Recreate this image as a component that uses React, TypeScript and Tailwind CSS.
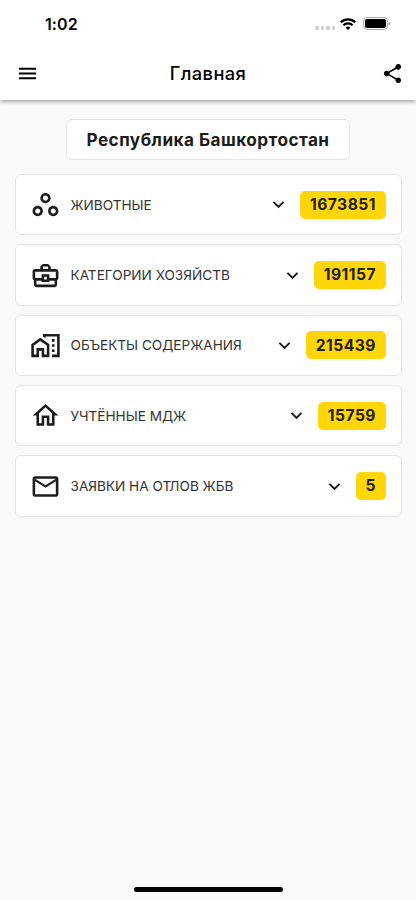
import {
	MdExpandMore,
	MdMenu,
	MdOutlineBusinessCenter,
	MdOutlineHome,
	MdOutlineHomeWork,
	MdOutlineMail,
	MdOutlineWorkspaces,
	MdShare,
} from "react-icons/md";
import type { IconType } from "react-icons";

type CategoryProps = {
	icon: IconType;
	title: string;
	count: number;
};

const categories: CategoryProps[] = [
	{ icon: MdOutlineWorkspaces, title: "ЖИВОТНЫЕ", count: 1673851 },
	{ icon: MdOutlineBusinessCenter, title: "КАТЕГОРИИ ХОЗЯЙСТВ", count: 191157 },
	{ icon: MdOutlineHomeWork, title: "ОБЪЕКТЫ СОДЕРЖАНИЯ", count: 215439 },
	{ icon: MdOutlineHome, title: "УЧТЁННЫЕ МДЖ", count: 15759 },
	{ icon: MdOutlineMail, title: "ЗАЯВКИ НА ОТЛОВ ЖБВ", count: 5 },
];

function StatusBar() {
	return (
		<div className="flex h-[47px] items-center justify-between pl-[45px] pr-[26px] text-black">
			<span className="text-[16px] font-semibold leading-none tracking-[0.1px]">1:02</span>
			<div className="flex items-center">
				<div className="mr-[5px] mt-[9px] flex gap-[2px]">
					{[0, 1, 2, 3].map((dot) => (
						<span key={dot} className="size-[3.4px] rounded-full bg-[#c9c9c9]" />
					))}
				</div>
				<svg className="mr-[7px] h-[12px] w-[16px]" viewBox="0 0 16 12" fill="none" stroke="currentColor">
					<path d="M.9 4.3a10 10 0 0 1 14.2 0" strokeWidth="2.3" />
					<path d="M3.4 7.2a6.5 6.5 0 0 1 9.2 0" strokeWidth="2.2" />
					<path d="M8 12 5.5 9.6a3.6 3.6 0 0 1 5 0z" fill="currentColor" stroke="none" />
				</svg>
				<svg className="h-[13px] w-[27px]" viewBox="0 0 27 13">
					<rect x="0.5" y="0.5" width="24" height="12" rx="3.8" fill="none" stroke="#a3a3a3" />
					<rect x="2" y="2" width="21" height="9" rx="2" />
					<path d="M25.6 4.5v4c.8-.3 1.2-1.1 1.2-2s-.4-1.7-1.2-2z" fill="#999" />
				</svg>
			</div>
		</div>
	);
}

function Category({ icon: Icon, title, count }: CategoryProps) {
	return (
		<li className="flex h-[61.3px] items-center rounded-[6px] border border-[#e6e6e6] bg-white pl-[14px] pr-[14.5px]">
			<Icon className="size-[31px] shrink-0 text-[#1c1c1c]" />
			<span className="ml-[10px] text-[13.6px] text-[#333]">{title}</span>
			<MdExpandMore className="ml-auto size-[23px] shrink-0 text-[#1c1c1c]" />
			<span className="ml-[10px] flex h-[28px] items-center rounded-[5px] bg-[#ffd60a] px-[10px] text-[15.6px] font-bold tracking-[0.5px] text-[#222010]">
				{count}
			</span>
		</li>
	);
}

export default function App() {
	return (
		<div className="flex h-[900px] w-full flex-col bg-[#fafafa] font-['Inter',sans-serif]">
			<header className="h-[100px] shrink-0 bg-white shadow-[0_1px_5px_rgba(0,0,0,0.45)]">
				<StatusBar />
				<div className="grid h-[53px] grid-cols-[1fr_auto_1fr] items-center text-black">
					<button className="ml-[16px] w-fit" aria-label="Меню">
						<MdMenu className="size-[23px]" />
					</button>
					<h1 className="text-[18.3px] font-medium tracking-[0.4px]">Главная</h1>
					<button className="mr-[12px] w-fit justify-self-end" aria-label="Поделиться">
						<MdShare className="size-[23px]" />
					</button>
				</div>
			</header>
			<main className="flex grow flex-col px-[14.5px] pt-[19px]">
				<h2 className="flex h-[41px] w-[284px] items-center justify-center self-center rounded-[6px] border border-[#e6e6e6] bg-white pt-[1px] text-[17.2px] font-bold tracking-[0.45px] text-[#1c1c1c]">
					Республика Башкортостан
				</h2>
				<ul className="mt-[14.2px] flex flex-col gap-[9px]">
					{categories.map((category) => (
						<Category key={category.title} {...category} />
					))}
				</ul>
			</main>
			<div className="mb-[8px] h-[5px] w-[149px] self-center rounded-full bg-black" />
		</div>
	);
}
